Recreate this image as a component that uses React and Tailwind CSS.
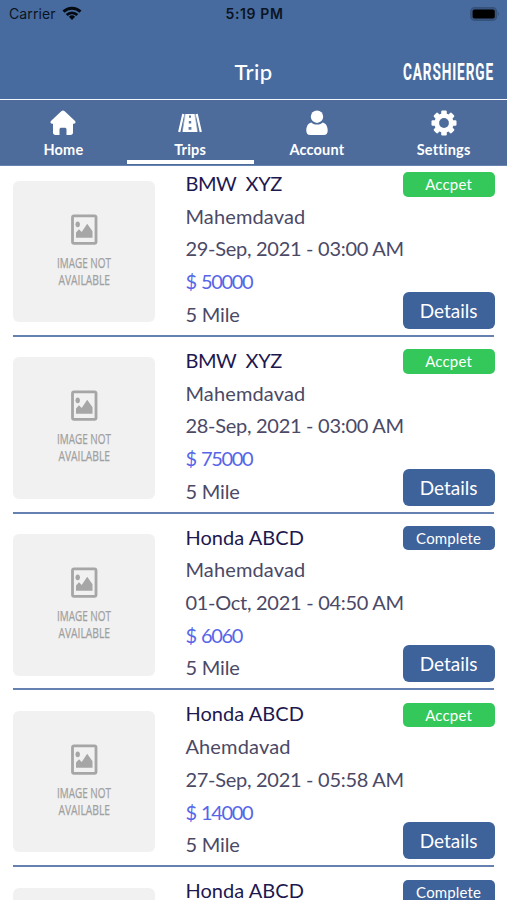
const trips = [
  { car: 'BMW  XYZ', carTrack: 'tracking-[-0.4px]', city: 'Mahemdavad', date: '29-Sep, 2021 - 03:00 AM', price: '$ 50000', status: 'Accpet' },
  { car: 'BMW  XYZ', carTrack: 'tracking-[-0.4px]', city: 'Mahemdavad', date: '28-Sep, 2021 - 03:00 AM', price: '$ 75000', status: 'Accpet' },
  { car: 'Honda ABCD', carTrack: 'tracking-[0.05px]', city: 'Mahemdavad', date: '01-Oct, 2021 - 04:50 AM', price: '$ 6060', status: 'Complete' },
  { car: 'Honda ABCD', carTrack: 'tracking-[0.05px]', city: 'Ahemdavad', date: '27-Sep, 2021 - 05:58 AM', price: '$ 14000', status: 'Accpet' },
];

const nextTrip = { car: 'Honda ABCD', carTrack: 'tracking-[0.05px]', status: 'Complete' };

function HomeIcon() {
  return (
    <svg width="26" height="26" viewBox="0 0 26 26" fill="white">
      <path d="M11.300 1.300a2.500 2.500 0 0 1 3.400 0L24.800 10.800c1.300 1.300.8 3-.9 3H23v8.600c0 1.600-.9 2.500-2.500 2.500h-4v-5.200c0-1.400-.7-2-1.800-2h-3.400c-1.100 0-1.800.6-1.800 2v5.200h-4C3.900 24.900 3 24 3 22.400v-8.600h-.900c-1.700 0-2.200-1.700-.9-3z" />
    </svg>
  );
}

function RoadIcon() {
  return (
    <svg width="26" height="26" viewBox="0 0 26 26">
      <path d="M7.800 4h10.400l2.300 18H5.500z" fill="white" />
      <path d="M6.300 4L2.200 22M19.700 4L23.800 22" stroke="white" strokeWidth="2.200" />
      <path d="M8.200 4L5.200 22M17.800 4l3 18" stroke="#8fa4c4" strokeWidth=".7" />
      <path d="M12 5.500h2v2.300h-2zM11.800 11h2.400v2.600h-2.400zM11.600 17h2.800v2.800h-2.800z" fill="#5f7ba8" />
    </svg>
  );
}

function AccountIcon() {
  return (
    <svg width="26" height="26" viewBox="0 0 26 26" fill="white">
      <circle cx="13" cy="6.700" r="6.200" />
      <path d="M7.300 12.400C9 14 11 14.600 13 14.600s4-.6 5.700-2.200c3.300.9 5 4 5 8 0 2.900-1.500 4.600-3.900 4.600H6.200c-2.400 0-3.900-1.700-3.900-4.600 0-4 1.700-7.100 5-8z" />
    </svg>
  );
}

function GearIcon() {
  return (
    <svg width="26" height="26" viewBox="0 0 26 26">
      <g fill="white">
        <rect x="10.200" y=".5" width="5.600" height="25" rx="1.200" />
        <rect x="10.200" y=".5" width="5.600" height="25" rx="1.200" transform="rotate(45 13 13)" />
        <rect x="10.200" y=".5" width="5.600" height="25" rx="1.200" transform="rotate(90 13 13)" />
        <rect x="10.200" y=".5" width="5.600" height="25" rx="1.200" transform="rotate(135 13 13)" />
        <circle cx="13" cy="13" r="9.700" />
      </g>
      <circle cx="13" cy="13" r="4.900" fill="#4d6c9c" />
    </svg>
  );
}

const tabs = [
  { label: 'Home', Icon: HomeIcon },
  { label: 'Trips', Icon: RoadIcon, active: true },
  { label: 'Account', Icon: AccountIcon },
  { label: 'Settings', Icon: GearIcon },
];

function StatusBar() {
  return (
    <div className="grid h-[27px] grid-cols-3 items-center pl-[9px] pr-[7px] font-['Inter','Liberation_Sans',sans-serif] text-[14px] text-[#0b1422]">
      <div className="flex items-center gap-[6px]">
        <span className="tracking-[0.1px]">Carrier</span>
        <svg width="20" height="15" viewBox="0 0 20 15" fill="none" stroke="#050a12" strokeWidth="2.900">
          <path d="M1.500 5.600a12.300 12.300 0 0 1 17 0" />
          <path d="M4.700 9a7.600 7.600 0 0 1 10.600 0" />
          <path d="M10 14l-3.100-3.200a4.500 4.500 0 0 1 6.200 0z" fill="#050a12" stroke="none" />
        </svg>
      </div>
      <span className="text-center font-semibold tracking-[0.600px]">5:19 PM</span>
      <div className="flex items-center justify-end">
        <svg width="30" height="14" viewBox="0 0 30 14">
          <rect x=".7" y=".7" width="26" height="12.600" rx="3.800" fill="#3a5680" stroke="#35527c" strokeWidth="1.200" />
          <rect x="2.600" y="2.500" width="22.200" height="9" rx="2" fill="black" />
          <path d="M28.300 4.800q1.700 2.200 0 4.400z" fill="#2f4a70" />
        </svg>
      </div>
    </div>
  );
}

function Placeholder({ empty }) {
  return (
    <div className="mt-[20.600px] h-[141.500px] w-[142px] shrink-0 rounded-[6px] bg-[#f1f1f1]">
      {!empty && (
        <svg width="142" height="141" viewBox="0 0 142 141">
          <rect x="59.500" y="34.800" width="23.500" height="27.500" rx="1.500" fill="none" stroke="#a6a6a6" strokeWidth="2.800" />
          <ellipse cx="64.700" cy="43.300" rx="2.200" ry="2.900" fill="#a6a6a6" />
          <path d="M63 56.800v-5.300l3-3.200 2.700 2.700 5.500-8.300 5.300 7.500v6.600z" fill="#a6a6a6" />
          <g fill="#a0a0a0" stroke="#a0a0a0" strokeWidth=".25" className="font-['Open_Sans',sans-serif] text-[13.800px]">
            <text x="44" y="87.300" textLength="54" lengthAdjust="spacingAndGlyphs">IMAGE NOT</text>
            <text x="45.500" y="104.300" textLength="51.500" lengthAdjust="spacingAndGlyphs">AVAILABLE</text>
          </g>
        </svg>
      )}
    </div>
  );
}

function TripRow({ trip, peek }) {
  const done = trip.status === 'Complete';
  return (
    <li className="flex h-[176.800px] border-b-2 border-[#6581b2]">
      <Placeholder empty={peek} />
      <div className="ml-[30.500px] flex min-w-0 flex-1 flex-col whitespace-pre pt-[7px] text-[20px] leading-[32.700px] text-[#4b4966]">
        <span className={`text-[#1d184f] ${trip.carTrack}`}>{trip.car}</span>
        {!peek && (
          <>
            <span className="tracking-[0.15px]">{trip.city}</span>
            <span className="tracking-[-0.280px]">{trip.date}</span>
            <span className="tracking-[-1.350px] [word-spacing:1.500px] text-[#5766e8]">{trip.price}</span>
            <span className="tracking-[-0.150px]">5 Mile</span>
          </>
        )}
      </div>
      <div className="-mr-[0.500px] flex w-[92px] shrink-0 flex-col justify-between pb-[6px] pt-[12.400px] text-center text-white">
        <span className={`h-[24.500px] rounded-[5px] text-[15px] leading-[24px] tracking-[0.150px] ${done ? 'bg-[#3e629a]' : 'bg-[#34c759]'}`}>
          {trip.status}
        </span>
        {!peek && (
          <button className="h-[37px] rounded-[6px] bg-[#3e629a] text-[19px] leading-[35px]">Details</button>
        )}
      </div>
    </li>
  );
}

export default function App() {
  return (
    <div className="flex h-[900px] w-[507px] flex-col overflow-hidden bg-white font-['Lato','Open_Sans',sans-serif]">
      <header className="relative z-10 h-[166px] shrink-0 bg-[#476b9f]">
        <StatusBar />
        <div className="grid h-[71.500px] grid-cols-[1fr_auto_1fr] items-center px-[12px] pt-[17px]">
          <span />
          <h1 className="text-[22px] font-medium tracking-[0.400px] text-white">Trip</h1>
          <svg className="justify-self-end overflow-visible" width="93" height="32" viewBox="0 0 93 32">
            <text x="1" y="24.800" textLength="91" lengthAdjust="spacingAndGlyphs" fill="white" className="font-['Roboto','Liberation_Sans',sans-serif] text-[23.500px] font-bold tracking-[1.500px]">CARSHIERGE</text>
          </svg>
        </div>
        <nav className="grid h-[67.500px] grid-cols-4 border-b border-t-[1.500px] border-b-[#6884b3] border-t-[#f2f6fc] bg-[#4d6c9c]">
          {tabs.map(({ label, Icon, active }) => (
            <div key={label} className="flex flex-col items-center pt-[10px] text-white">
              <Icon />
              <span className="text-[14.500px] font-bold leading-[28px] tracking-[0.200px]">{label}</span>
              {active && <span className="-mt-[3.500px] h-[4px] w-full bg-white" />}
            </div>
          ))}
        </nav>
      </header>
      <ul className="-mt-[6px] px-[12.900px]">
        {trips.map((trip, i) => (
          <TripRow key={i} trip={trip} />
        ))}
        <TripRow trip={nextTrip} peek />
      </ul>
    </div>
  );
}
